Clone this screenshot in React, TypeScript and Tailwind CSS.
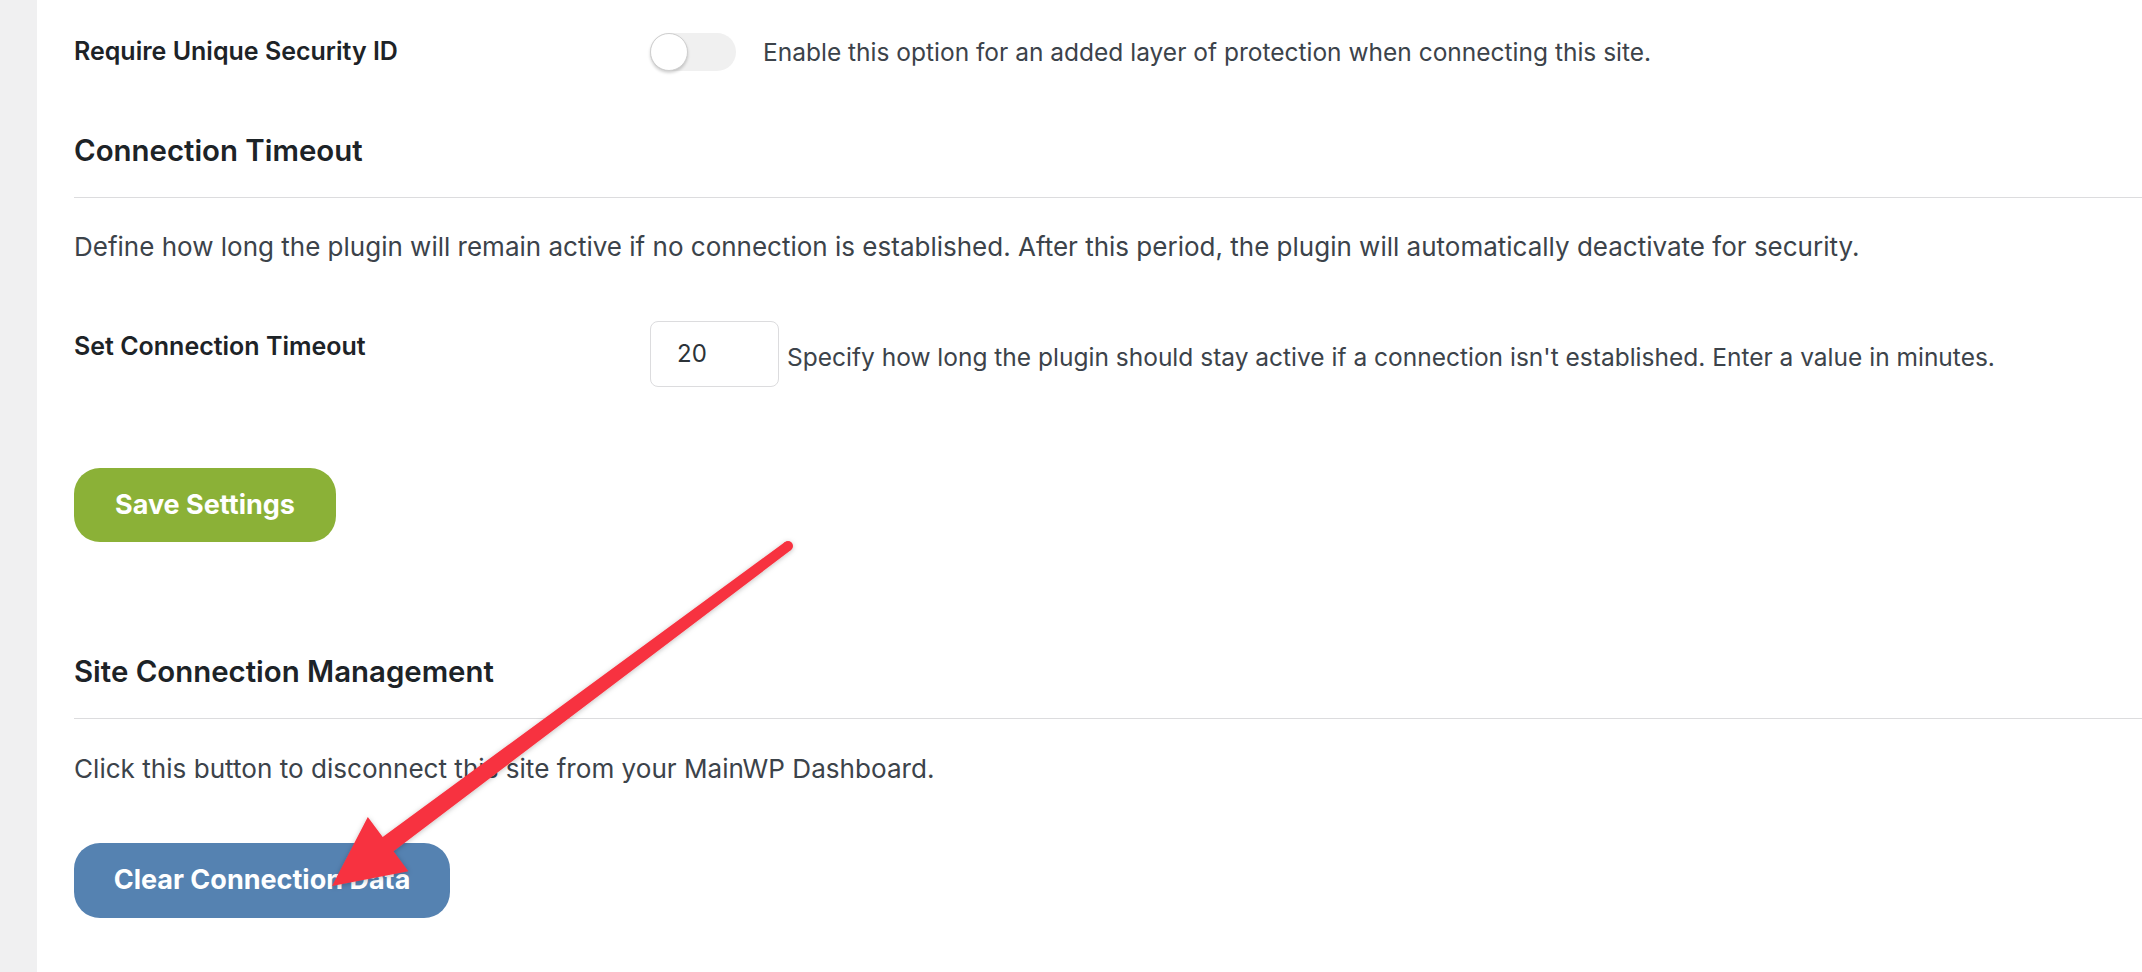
import React from "react";

const font = { fontFamily: 'Inter, "Noto Sans", "Liberation Sans", sans-serif' };

function Toggle() {
  return (
    <div className="relative h-[38px] w-[86px] shrink-0 rounded-full bg-[#f0f0f0]">
      <div className="absolute left-0 top-0 h-[38px] w-[38px] rounded-full border border-[#cfcfcf] bg-white shadow-[0_2px_3px_rgba(0,0,0,0.18)]" />
    </div>
  );
}

function Arrow() {
  return (
    <svg
      className="pointer-events-none absolute left-0 top-0"
      width="2142"
      height="972"
      viewBox="0 0 2142 972"
    >
      <defs>
        <filter id="sh" x="-20%" y="-20%" width="140%" height="140%">
          <feDropShadow dx="0" dy="1" stdDeviation="2.5" floodColor="#000" floodOpacity="0.25" />
        </filter>
      </defs>
      <g filter="url(#sh)" fill="#f7323f">
        <polygon points="785.0,542.0 382.7,836.9 367.8,816.9 332,886 408.4,871.3 393.5,851.3 791.0,550.0" />
        <circle cx="788" cy="546" r="5" />
      </g>
    </svg>
  );
}

export default function App() {
  return (
    <div className="relative flex h-[972px] w-full overflow-hidden bg-white" style={font}>
      <div className="w-[37px] shrink-0 bg-[#f0f0f1]" />
      <div className="flex min-w-0 flex-1 flex-col pl-[37px]">
        {/* Row 1 */}
        <div className="mt-[33px] flex h-[38px] items-center whitespace-nowrap">
          <div className="w-[576px] shrink-0 text-[25px] font-semibold text-[#1d2327]">
            Require Unique Security ID
          </div>
          <Toggle />
          <div className="ml-[27px] text-[24.5px] text-[#3c434a]">
            Enable this option for an added layer of protection when connecting this site.
          </div>
        </div>

        {/* Connection Timeout */}
        <h2 className="mt-[62px] whitespace-nowrap text-[29.4px] font-semibold leading-[36px] text-[#1d2327]">
          Connection Timeout
        </h2>
        <div className="mt-[28px] border-t border-[#dcdcde]" />
        <p className="mt-[34px] whitespace-nowrap text-[26px] leading-[30px] text-[#3c434a]">
          Define how long the plugin will remain active if no connection is established. After this period, the plugin will automatically deactivate for security.
        </p>

        <div className="mt-[59px] flex items-start whitespace-nowrap">
          <div className="w-[576px] shrink-0 pt-[10px] text-[25px] font-semibold leading-[30px] text-[#1d2327]">
            Set Connection Timeout
          </div>
          <div className="flex items-center">
            <div className="flex h-[66px] w-[129px] shrink-0 items-center rounded-[8px] border border-[#dcdcde] bg-white pl-[26px] text-[24px] text-[#2c3338]">
              20
            </div>
            <div className="ml-[8px] pt-[6px] text-[24.5px] text-[#3c434a]">
              Specify how long the plugin should stay active if a connection isn't established. Enter a value in minutes.
            </div>
          </div>
        </div>

        <div className="mt-[81px]">
          <button className="flex h-[74px] w-[262px] items-center justify-center rounded-[26px] bg-[#8bb137] text-[27px] font-bold text-white">
            Save Settings
          </button>
        </div>

        {/* Site Connection Management */}
        <h2 className="mt-[112px] whitespace-nowrap text-[29.4px] font-semibold leading-[36px] text-[#1d2327]">
          Site Connection Management
        </h2>
        <div className="mt-[28px] border-t border-[#dcdcde]" />
        <p className="mt-[35px] whitespace-nowrap text-[26.1px] leading-[30px] text-[#3c434a]">
          Click this button to disconnect this site from your MainWP Dashboard.
        </p>

        <div className="mt-[59px]">
          <button className="flex h-[75px] w-[376px] items-center justify-center rounded-[26px] bg-[#5582b1] text-[27px] font-bold text-white">
            Clear Connection Data
          </button>
        </div>
      </div>
      <Arrow />
    </div>
  );
}
